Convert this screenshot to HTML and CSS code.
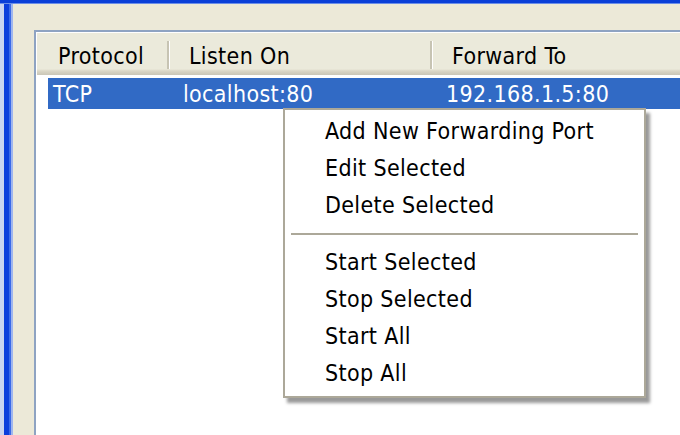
FILE: index.html
```html
<!DOCTYPE html>
<html>
<head>
<meta charset="utf-8">
<link rel="stylesheet" href="styles.css">
</head>
<body>
<div class="win">
  <div class="topbar"></div>
  <div class="client">
    <div class="list">
      <div class="header">
        <div class="hcol c1">Protocol</div>
        <div class="hsep"></div>
        <div class="hcol c2">Listen On</div>
        <div class="hsep"></div>
        <div class="hcol c3">Forward To</div>
      </div>
      <div class="row selected">
        <span class="cell r1">TCP</span>
        <span class="cell r2">localhost:80</span>
        <span class="cell r3">192.168.1.5:80</span>
      </div>
    </div>
  </div>
  <div class="menu">
    <div class="item">Add New Forwarding Port</div>
    <div class="item">Edit Selected</div>
    <div class="item">Delete Selected</div>
    <div class="sep"></div>
    <div class="item">Start Selected</div>
    <div class="item">Stop Selected</div>
    <div class="item">Start All</div>
    <div class="item">Stop All</div>
  </div>
</div>
</body>
</html>
```

FILE: styles.css
```css
html, body {
  margin: 0;
  padding: 0;
  background: #ffffff;
}
body {
  width: 680px;
  height: 435px;
  overflow: hidden;
  font-family: "DejaVu Sans Condensed", "DejaVu Sans", sans-serif;
  font-stretch: condensed;
  font-size: 23px;
  letter-spacing: 0.35px;
  color: #000;
}
.win {
  position: relative;
  width: 680px;
  height: 435px;
  display: flex;
  flex-direction: column;
  overflow: hidden;
}
.topbar {
  height: 4px;
  flex: none;
  background: linear-gradient(to bottom, #0a3fd8 0 3px, #6b8ee8 3px 4px);
}
.client {
  flex: 1;
  display: flex;
  padding: 26px 0 0 34px;
  background: linear-gradient(to right, #c9d4f0 0 4px, #0b3edc 4px 9px, #3a6ae8 9px 11px, #9fb5ee 11px 13px, #ece9d8 13px);
}
.list {
  flex: 1;
  margin-right: -20px;
  margin-bottom: -20px;
  border: 2px solid #8ea3c2;
  padding: 1px;
  background: #fff;
}
.header {
  display: flex;
  height: 42px;
  box-sizing: border-box;
  background: linear-gradient(to bottom, #ebeadb 0, #ebeadb 36px, #e2dfcf 37px, #d6d2c2 39px, #cbc7b8 42px);
}
.hcol {
  display: flex;
  align-items: center;
  padding-top: 4px;
  box-sizing: border-box;
}
.c1 { width: 130px; padding-left: 21px; }
.c2 { width: 260px; padding-left: 19px; }
.c3 { flex: 1; padding-left: 19px; }
.hsep {
  width: 2px;
  margin: 8px 0 6px;
  background: #c7c4b3;
  border-right: 1px solid #ffffff;
}
.row {
  display: flex;
  align-items: center;
  height: 31px;
  margin: 3px 0 0 11px;
}
.row.selected {
  background: #316ac5;
  color: #ffffff;
}
.r1 { width: 120px; padding-left: 5px; box-sizing: border-box; }
.r2 { width: 262px; padding-left: 15px; box-sizing: border-box; }
.r3 { padding-left: 16px; }
.menu {
  position: absolute;
  left: 283px;
  top: 108px;
  width: 363px;
  height: 290px;
  box-sizing: border-box;
  border: 2px solid #aca899;
  background: #ffffff;
  padding: 3px 0 4px;
  box-shadow: 4px 5px 3px rgba(0, 0, 0, 0.4);
}
.item {
  height: 37px;
  line-height: 37px;
  padding-left: 40px;
}
.sep {
  height: 20px;
  margin: 0 6px;
  display: flex;
  align-items: center;
}
.sep::before {
  content: "";
  flex: 1;
  height: 2px;
  background: #aca899;
  border-bottom: 1px solid #ffffff;
}
```
